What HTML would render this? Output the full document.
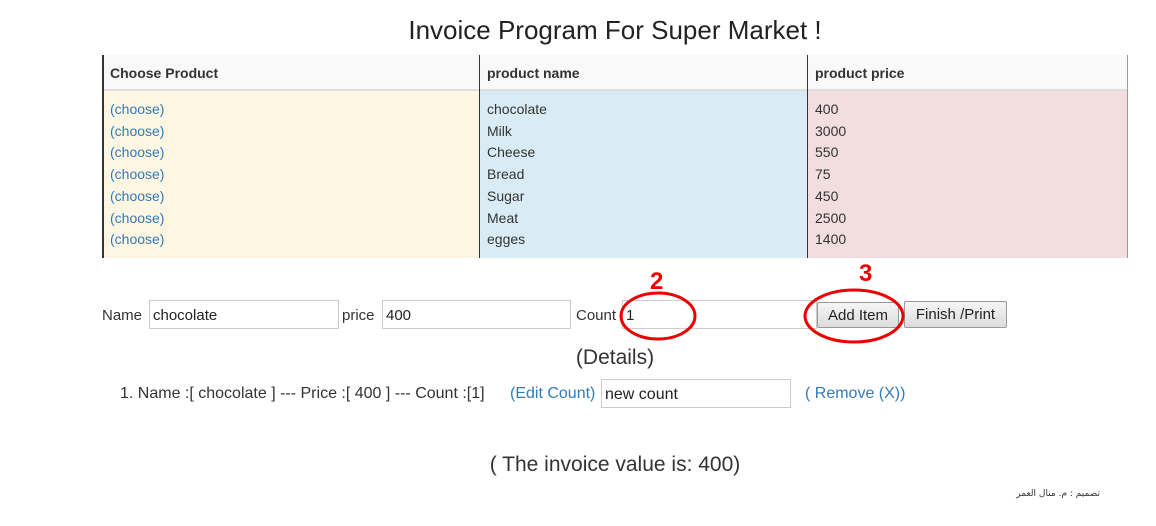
<!DOCTYPE html>
<html><head><meta charset="utf-8"><style>
body{margin:0;width:1156px;height:526px;background:#fff;font-family:"Liberation Sans",Arial,sans-serif;color:#333;position:relative;overflow:hidden}
.a{position:absolute;white-space:nowrap}
.t{font-size:14px;line-height:21.7px}
.blue{color:#337ab7}
input{position:absolute;box-sizing:border-box;border:1px solid #ccc;font:15px "Liberation Sans",sans-serif;padding:2px 3px 0;color:#222;background:#fff}
.btn{position:absolute;box-sizing:border-box;border:1px solid #999;border-radius:2px;background:linear-gradient(#f6f6f6,#dcdcdc);font:15px "Liberation Sans",sans-serif;color:#222;text-align:center;line-height:26px}
</style></head><body>
<div class="a" style="left:0;width:1230px;text-align:center;top:15px;font-size:26px;color:#222">Invoice Program For Super Market !</div>
<div class="a" style="left:102px;top:55px;width:1026px;height:36px;background:#f9f9f9;border-bottom:2px solid #ddd;box-sizing:border-box"></div>
<div class="a" style="left:102px;top:91px;width:377px;height:167px;background:#fdf6e3"></div>
<div class="a" style="left:479px;top:91px;width:328px;height:167px;background:#d9ecf6"></div>
<div class="a" style="left:807px;top:91px;width:321px;height:167px;background:#f2dede"></div>
<div class="a" style="left:102px;top:55px;width:2px;height:203px;background:#333"></div>
<div class="a" style="left:479px;top:55px;width:1px;height:203px;background:#333"></div>
<div class="a" style="left:807px;top:55px;width:1px;height:203px;background:#333"></div>
<div class="a" style="left:1127px;top:55px;width:1px;height:203px;background:#999"></div>
<div class="a" style="left:110px;top:65px;font-size:14px;font-weight:bold">Choose Product</div>
<div class="a" style="left:487px;top:65px;font-size:14px;font-weight:bold">product name</div>
<div class="a" style="left:815px;top:65px;font-size:14px;font-weight:bold">product price</div>
<div class="a t blue" style="left:110px;top:99px">(choose)<br>(choose)<br>(choose)<br>(choose)<br>(choose)<br>(choose)<br>(choose)</div>
<div class="a t" style="left:487px;top:99px">chocolate<br>Milk<br>Cheese<br>Bread<br>Sugar<br>Meat<br>egges</div>
<div class="a t" style="left:815px;top:99px">400<br>3000<br>550<br>75<br>450<br>2500<br>1400</div>
<div class="a" style="left:102px;top:307px;font-size:15px">Name</div>
<input style="left:149px;top:300px;width:190px;height:29px" value="chocolate">
<div class="a" style="left:342px;top:307px;font-size:15px">price</div>
<input style="left:382px;top:300px;width:189px;height:29px" value="400">
<div class="a" style="left:576px;top:307px;font-size:15px">Count</div>
<input style="left:622px;top:300px;width:195px;height:29px" value="1">
<div class="btn" style="left:817px;top:302px;width:82px;height:26px">Add Item</div>
<div class="btn" style="left:904px;top:301px;width:103px;height:27px">Finish /Print</div>
<svg class="a" style="left:0;top:0" width="1156" height="526">
<ellipse cx="658" cy="316" rx="37" ry="23" fill="none" stroke="#e00" stroke-width="3"/>
<ellipse cx="854" cy="316" rx="49" ry="26" fill="none" stroke="#e00" stroke-width="3"/>
<text x="650" y="289" font-family="Liberation Sans" font-weight="bold" font-size="24" fill="#e00">2</text>
<text x="859" y="281" font-family="Liberation Sans" font-weight="bold" font-size="24" fill="#e00">3</text>
</svg>
<div class="a" style="left:0;width:1230px;text-align:center;top:346px;font-size:21px">(Details)</div>
<div class="a" style="left:120px;top:385px;font-size:16px">1. Name :[ chocolate ] --- Price :[ 400 ] --- Count :[1]</div>
<div class="a blue" style="left:510px;top:385px;font-size:16px">(Edit Count)</div>
<input style="left:601px;top:379px;width:190px;height:29px;font-size:16px" value="new count">
<div class="a blue" style="left:805px;top:385px;font-size:16px">( Remove (X))</div>
<div class="a" style="left:0;width:1230px;text-align:center;top:453px;font-size:21px">( The invoice value is: 400)</div>
<div class="a" style="left:1000px;width:100px;text-align:right;top:489px;font-size:9px;font-family:'DejaVu Sans',sans-serif" dir="rtl">تصميم : م. منال العمر</div>
</body></html>
